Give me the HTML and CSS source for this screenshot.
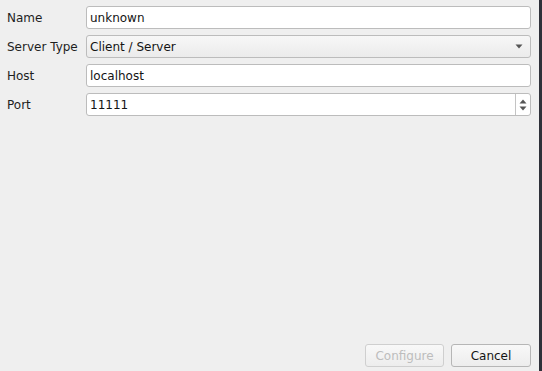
FILE: index.html
```html
<!DOCTYPE html>
<html>
<head>
<meta charset="utf-8">
<link rel="stylesheet" href="styles.css">
</head>
<body>
<div class="window">
  <div class="dialog">
    <div class="form">
      <label class="label">Name</label>
      <div class="field input">unknown</div>
      <label class="label">Server Type</label>
      <div class="field combo"><span>Client / Server</span><svg class="arrow" width="8" height="5" viewBox="0 0 8 5"><path d="M0.5 0.5 H7.5 L4 4.5 Z" fill="#555"/></svg></div>
      <label class="label">Host</label>
      <div class="field input">localhost</div>
      <label class="label">Port</label>
      <div class="field spin"><span class="spin-text">11111</span><div class="spin-btns"><svg width="8" height="5" viewBox="0 0 8 5"><path d="M0.5 4.5 H7.5 L4 0.5 Z" fill="#555"/></svg><svg width="8" height="5" viewBox="0 0 8 5"><path d="M0.5 0.5 H7.5 L4 4.5 Z" fill="#555"/></svg></div></div>
    </div>
    <div class="buttons">
      <button class="btn disabled">Configure</button>
      <button class="btn">Cancel</button>
    </div>
  </div>
  <div class="edge"></div>
</div>
</body>
</html>
```
FILE: styles.css
```css
html, body {
  margin: 0;
  padding: 0;
  width: 542px;
  height: 371px;
  overflow: hidden;
}
body {
  font-family: "DejaVu Sans", sans-serif;
  font-size: 12px;
  color: #1e1e1e;
  background: #efefef;
}
.window {
  display: flex;
  height: 371px;
}
.dialog {
  flex: 1;
  display: flex;
  flex-direction: column;
  justify-content: space-between;
  padding: 6px 8px 4px 7px;
}
.edge {
  width: 3px;
  background: #2e3039;
}
.form {
  display: grid;
  grid-template-columns: 73px 1fr;
  column-gap: 6px;
  row-gap: 6px;
  grid-auto-rows: 23px;
}
.label {
  display: flex;
  align-items: center;
  white-space: nowrap;
}
.field {
  box-sizing: border-box;
  border: 1px solid #bcbcbc;
  border-radius: 3px;
  display: flex;
  align-items: center;
  padding-left: 3px;
  color: #141414;
}
.input {
  background: #fff;
}
.combo {
  background: linear-gradient(#f7f7f7, #ebebeb);
  justify-content: space-between;
  padding-right: 7px;
}
.spin {
  background: #fff;
  padding-right: 0;
}
.spin-text {
  flex: 1;
}
.spin-btns {
  width: 14px;
  height: 100%;
  border-left: 1px solid #c4c4c4;
  display: flex;
  flex-direction: column;
  align-items: center;
  justify-content: center;
  gap: 2px;
}
.buttons {
  display: flex;
  justify-content: flex-end;
  gap: 7px;
}
.btn {
  box-sizing: border-box;
  height: 23px;
  font-family: "DejaVu Sans", sans-serif;
  font-size: 12px;
  color: #141414;
  background: linear-gradient(#f8f8f8, #ededed);
  border: 1px solid #b6b6b6;
  border-radius: 3px;
  padding: 0;
  width: 80px;
}
.btn.disabled {
  color: #bdbdbd;
  border-color: #cfcfcf;
  width: 79px;
}
```
